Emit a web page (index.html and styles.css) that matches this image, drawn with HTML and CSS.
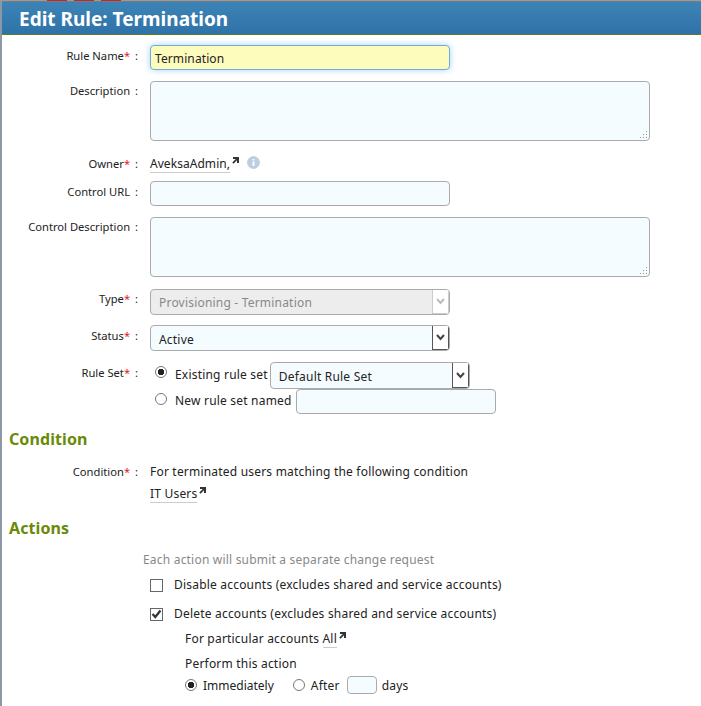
FILE: index.html
```html
<!DOCTYPE html>
<html lang="en">

<head>
    <meta charset="UTF-8">
    <title>Edit Rule: Termination</title>
    <link rel="stylesheet" href="styles.css">
</head>

<body>
    <div class="top-marks">
        <span></span><span></span><span></span>
    </div>
    <div class="panel">
        <h1 class="panel-title">Edit Rule: Termination</h1>

        <div class="form">
            <div class="row row-name">
                <label class="label">Rule Name<i>*</i> <b>:</b></label>
                <input type="text" class="field field-wide field-focus" value="Termination">
            </div>

            <div class="row row-desc">
                <label class="label">Description <b>:</b></label>
                <div class="area"><svg class="grip" width="10" height="10" viewBox="0 0 10 10"><path d="M7 1h1v1H7zM4 4h1v1H4zM7 4h1v1H7zM1 7h1v1H1zM4 7h1v1H4zM7 7h1v1H7z" fill="#999"/></svg></div>
            </div>

            <div class="row row-owner">
                <label class="label">Owner<i>*</i> <b>:</b></label>
                <span class="link">AveksaAdmin,</span>
                <svg class="ext" width="7" height="7" viewBox="0 0 7 7"><path d="M1 0h6v6H5V3.200L1.500 6.700 .3 5.500 3.800 2H1z" fill="#333"/></svg>
                <svg class="info" width="13" height="13" viewBox="0 0 13 13"><circle cx="6.500" cy="6.500" r="6" fill="#b9cde3" stroke="#cfcfcf"/><rect x="5.500" y="5.500" width="2" height="4.500" fill="#fff"/><rect x="5.500" y="3" width="2" height="1.500" fill="#fff"/></svg>
            </div>

            <div class="row row-url">
                <label class="label">Control URL <b>:</b></label>
                <input type="text" class="field field-wide">
            </div>

            <div class="row row-desc">
                <label class="label">Control Description <b>:</b></label>
                <div class="area"><svg class="grip" width="10" height="10" viewBox="0 0 10 10"><path d="M7 1h1v1H7zM4 4h1v1H4zM7 4h1v1H7zM1 7h1v1H1zM4 7h1v1H4zM7 7h1v1H7z" fill="#999"/></svg></div>
            </div>

            <div class="row row-type">
                <label class="label">Type<i>*</i> <b>:</b></label>
                <div class="select select-wide select-off">
                    <span class="select-text">Provisioning - Termination</span>
                    <span class="select-btn"><svg width="9" height="7" viewBox="0 0 9 7"><path d="M1 1l3.500 4L8 1" fill="none" stroke="#bbb" stroke-width="2"/></svg></span>
                </div>
            </div>

            <div class="row row-status">
                <label class="label">Status<i>*</i> <b>:</b></label>
                <div class="select select-wide">
                    <span class="select-text">Active</span>
                    <span class="select-btn"><svg width="9" height="7" viewBox="0 0 9 7"><path d="M1 1l3.500 4L8 1" fill="none" stroke="#444" stroke-width="2"/></svg></span>
                </div>
            </div>

            <div class="row row-set">
                <label class="label">Rule Set<i>*</i> <b>:</b></label>
                <div class="set-options">
                    <div class="set-line">
                        <span class="radio radio-on"></span>
                        <span class="set-text set-text-first">Existing rule set</span>
                        <div class="select select-set">
                            <span class="select-text">Default Rule Set</span>
                            <span class="select-btn"><svg width="9" height="7" viewBox="0 0 9 7"><path d="M1 1l3.500 4L8 1" fill="none" stroke="#444" stroke-width="2"/></svg></span>
                        </div>
                    </div>
                    <div class="set-line">
                        <span class="radio"></span>
                        <span class="set-text">New rule set named</span>
                        <input type="text" class="field field-set">
                    </div>
                </div>
            </div>

            <h2 class="section section-condition">Condition</h2>

            <div class="row row-cond">
                <label class="label">Condition<i>*</i> <b>:</b></label>
                <div class="cond-text">
                    <div>For terminated users matching the following condition</div>
                    <div class="cond-link"><span class="link">IT Users</span><svg class="ext" width="7" height="7" viewBox="0 0 7 7"><path d="M1 0h6v6H5V3.200L1.500 6.700 .3 5.500 3.800 2H1z" fill="#333"/></svg></div>
                </div>
            </div>

            <h2 class="section section-actions">Actions</h2>

            <div class="actions">
                <div class="hint">Each action will submit a separate change request</div>
                <div class="check-line check-first">
                    <span class="check"></span>
                    <span>Disable accounts (excludes shared and service accounts)</span>
                </div>
                <div class="check-line check-second">
                    <span class="check"><svg width="11" height="10" viewBox="0 0 11 10"><path d="M1.500 5l2.800 3L9.500 1.500" fill="none" stroke="#333" stroke-width="2.200"/></svg></span>
                    <span>Delete accounts (excludes shared and service accounts)</span>
                </div>
                <div class="sub">
                    <div class="sub-accounts">For particular accounts <span class="link">All</span><svg class="ext" width="7" height="7" viewBox="0 0 7 7"><path d="M1 0h6v6H5V3.200L1.500 6.700 .3 5.500 3.800 2H1z" fill="#333"/></svg></div>
                    <div class="sub-perform">Perform this action</div>
                    <div class="sub-when">
                        <span class="radio radio-on"></span>
                        <span class="when-now">Immediately</span>
                        <span class="radio"></span>
                        <span class="when-after">After</span>
                        <input type="text" class="field field-days">
                        <span>days</span>
                    </div>
                </div>
            </div>
        </div>
    </div>
</body>

</html>
```

FILE: styles.css
```css
html {
    box-sizing: border-box;
}

*,
*::before,
*::after {
    box-sizing: inherit;
}

body {
    margin: 0;
    height: 706px;
    overflow: hidden;
    background-color: #fff;
    color: #222;
    font-family: "Noto Sans", "Open Sans", sans-serif;
    font-size: 12px;
    letter-spacing: 0.2px;
}

.top-marks {
    display: flex;
    gap: 7px;
    height: 1px;
    padding-left: 47px;
    background-color: #9a9a9a;
}

.top-marks span {
    width: 20px;
    height: 1px;
    background-color: #c8242c;
}

.panel {
    border-left: 2px solid #8b99a6;
    height: 705px;
}

.panel-title {
    margin: 0;
    height: 34px;
    padding: 0 0 0 17px;
    background: linear-gradient(to bottom, #3d84b6, #2f72a8);
    border-top: 1px solid #6d7d8a;
    border-bottom: 1px solid #5f7a2a;
    color: #fff;
    font-size: 19px;
    font-weight: bold;
    letter-spacing: 0;
    line-height: 34px;
}

.form {
    position: relative;
}

.row {
    display: flex;
    align-items: flex-start;
}

.label {
    flex: none;
    width: 136px;
    margin-right: 12px;
    text-align: right;
    color: #222;
    font-size: 11.200px;
    letter-spacing: 0;
    white-space: nowrap;
}

.label i {
    color: #e01b1b;
    font-style: normal;
}

.label b {
    font-weight: normal;
    margin-left: 2px;
}

.row-name {
    margin-top: 10px;
    height: 36px;
}

.row-desc {
    height: 60px;
}

.row-owner {
    margin-top: 12px;
    height: 28px;
    align-items: flex-start;
    padding-top: 2px;
}

.row-url {
    height: 36px;
}

.row-type {
    margin-top: 12px;
    height: 36px;
}

.row-status {
    height: 37px;
}

.row-set {
    height: 52px;
}

.row-desc .label,
.row-type .label {
    line-height: 20px;
}

.row-url .label,
.row-set .label {
    line-height: 22px;
}

.row-status .label {
    line-height: 21px;
}

.row-name .label {
    line-height: 22px;
}

.row-owner .label {
    line-height: 17px;
}

.field {
    display: block;
    height: 25px;
    padding: 0 4px;
    border: 1px solid #aaa;
    border-radius: 4px;
    background-color: #f5fcff;
    color: #222;
    font-family: inherit;
    font-size: 12px;
    letter-spacing: 0.1px;
}

.field-wide {
    width: 300px;
}

.field-focus {
    padding-top: 2px;
    border-color: #6cace0;
    background-color: #fefcbd;
    box-shadow: 0 0 6px #a9d1f3;
}

.area {
    position: relative;
    width: 500px;
    height: 60px;
    border: 1px solid #aaa;
    border-radius: 4px;
    background-color: #f5fcff;
}

.grip {
    position: absolute;
    right: 0;
    bottom: 0;
}

.link {
    border-bottom: 1px solid #ccc;
    line-height: 17px;
    display: inline-block;
}

.row-owner .link {
    letter-spacing: 0.05px;
}

.ext {
    vertical-align: 4px;
    margin-left: 2px;
}

.row-owner .ext {
    margin-top: 2px;
}

.info {
    margin-left: 8px;
    margin-top: 1px;
}

.select {
    display: flex;
    align-items: stretch;
    border: 1px solid #aaa;
    border-radius: 4px;
    background-color: #f5fcff;
    overflow: hidden;
}

.select-wide {
    width: 300px;
    height: 26px;
}

.select-text {
    flex: 1;
    padding-left: 8px;
    line-height: 27px;
}

.select-btn {
    flex: none;
    width: 17px;
    display: flex;
    align-items: center;
    justify-content: center;
    background-color: #fff;
    border-left: 1px solid #555;
    border-right: 1px solid #555;
    border-bottom: 1px solid #555;
}

.select-off {
    background-color: #ededed;
    color: #888;
}

.select-off .select-text {
    line-height: 26px;
}

.select-off .select-btn {
    border-color: #ccc;
}

.set-options {
    margin-left: 5px;
}

.set-line {
    display: flex;
    align-items: flex-start;
    height: 27px;
}

.set-line .radio {
    margin-top: 4px;
    margin-right: 8px;
}

.set-text {
    margin-right: 4px;
    line-height: 24px;
}

.set-text-first {
    margin-right: 2px;
    line-height: 26px;
}

.select-set {
    width: 200px;
    height: 27px;
}

.field-set {
    width: 200px;
    margin-top: 0;
}

.radio {
    flex: none;
    display: inline-block;
    width: 12px;
    height: 12px;
    border: 1px solid #777;
    border-radius: 50%;
    background-color: #fff;
}

.radio-on {
    background: radial-gradient(circle, #222 0, #222 3px, #fff 3.500px);
}

.section {
    margin: 0;
    color: #688a08;
    font-size: 16px;
    font-weight: bold;
    letter-spacing: 0.1px;
    line-height: 22px;
    padding-left: 7px;
}

.section-condition {
    margin-top: 14px;
}

.row-cond {
    margin-top: 12px;
    height: 46px;
    line-height: 20px;
}

.cond-link {
    margin-top: 2px;
}

.section-actions {
    margin-top: 9px;
}

.actions {
    margin-left: 141px;
}

.hint {
    margin-top: 12px;
    color: #888;
    line-height: 18px;
}

.check-line {
    display: flex;
    align-items: center;
    margin-left: 7px;
    line-height: 18px;
}

.check-first {
    margin-top: 7px;
}

.check-second {
    margin-top: 11px;
}

.check {
    flex: none;
    display: flex;
    align-items: center;
    justify-content: center;
    width: 13px;
    height: 13px;
    margin-right: 11px;
    border: 1px solid #666;
    background-color: #fff;
}

.sub {
    margin-left: 42px;
}

.sub-accounts {
    margin-top: 7px;
    line-height: 18px;
}

.sub-perform {
    margin-top: 7px;
    line-height: 18px;
}

.sub-when {
    display: flex;
    align-items: center;
    margin-top: 3px;
    height: 18px;
}

.when-now {
    margin: 0 19px 0 6px;
    letter-spacing: 0;
}

.when-after {
    margin: 0 7px 0 6px;
}

.field-days {
    width: 30px;
    height: 18px;
    margin-right: 5px;
}
```
